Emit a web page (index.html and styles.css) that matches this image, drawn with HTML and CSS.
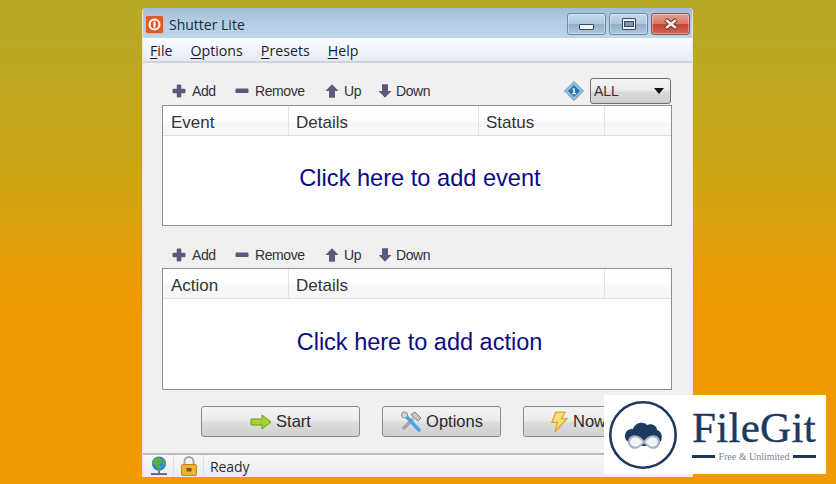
FILE: index.html
```html
<!DOCTYPE html>
<html lang="en">
<head>
<meta charset="utf-8">
<title>Shutter Lite</title>
<link rel="stylesheet" href="styles.css">
</head>
<body>
<svg class="defs" width="0" height="0" aria-hidden="true">
  <defs>
    <symbol id="i-add" viewBox="0 0 14 14"><path d="M4.700 1.500Q4.700 .5 5.700 .5H8.300Q9.300 .5 9.300 1.500V4.700H12.500Q13.500 4.700 13.500 5.700V8.300Q13.500 9.300 12.500 9.300H9.300V12.500Q9.300 13.500 8.300 13.500H5.700Q4.700 13.500 4.700 12.500V9.300H1.500Q.5 9.300 .5 8.300V5.700Q.5 4.700 1.500 4.700H4.700Z" fill="#5d5880"/></symbol>
    <symbol id="i-remove" viewBox="0 0 14 14"><rect x=".5" y="4.500" width="13" height="4.600" rx="1.200" fill="#5d5880"/></symbol>
    <symbol id="i-up" viewBox="0 0 14 14"><path d="M7 .3 13.600 7H10V13.700H4V7H.4Z" fill="#5d5880"/></symbol>
    <symbol id="i-down" viewBox="0 0 14 14"><path d="M7 13.700 13.400 7H10V.3H4V7H.6Z" fill="#5d5880"/></symbol>
  </defs>
</svg>
<main class="window">
  <header class="titlebar">
    <div class="title-left">
      <svg class="app-icon" width="19" height="19" viewBox="0 0 19 19"><rect x=".5" y=".5" width="18" height="18" rx="2" fill="#dc5a2a" stroke="#eeb49a"/><circle cx="9.500" cy="9.500" r="5" fill="none" stroke="#fff" stroke-width="2"/><rect x="8.500" y="6.500" width="2" height="6" fill="#fff"/></svg>
      <span class="title-text">Shutter Lite</span>
    </div>
    <div class="caption-buttons">
      <button class="cap cap-min" aria-label="Minimize"><span class="glyph-min"></span></button>
      <button class="cap cap-max" aria-label="Maximize"><span class="glyph-max"></span></button>
      <button class="cap cap-close" aria-label="Close">
        <svg width="16" height="12" viewBox="0 0 16 12"><path d="M2.500 1.500 13.500 10.500M13.500 1.500 2.500 10.500" stroke="#6b2a20" stroke-width="4.400"/><path d="M3 2 13 10M13 2 3 10" stroke="#f7ece6" stroke-width="2.600"/></svg>
      </button>
    </div>
  </header>
  <nav class="menubar">
    <span class="menu-item"><u>F</u>ile</span>
    <span class="menu-item"><u>O</u>ptions</span>
    <span class="menu-item"><u>P</u>resets</span>
    <span class="menu-item"><u>H</u>elp</span>
  </nav>
  <div class="content">
    <div class="toolbar">
      <span class="tool tool-add"><svg class="ti"><use href="#i-add"/></svg>Add</span>
      <span class="tool tool-remove"><svg class="ti"><use href="#i-remove"/></svg>Remove</span>
      <span class="tool tool-up"><svg class="ti"><use href="#i-up"/></svg>Up</span>
      <span class="tool tool-down"><svg class="ti"><use href="#i-down"/></svg>Down</span>
      <span class="spacer"></span>
      <svg class="info" width="20" height="20" viewBox="0 0 20 20"><path d="M10 .5 19.500 10 10 19.500 .5 10Z" fill="#8fc0e0" stroke="#5f9cc8"/><path d="M10 4 16 10 10 16 4 10Z" fill="#2f76a8"/><path d="M8.400 7.400H10.800V12H12V13.200H8.200V12H9.300V8.600H8.400Z" fill="#fff"/></svg>
      <div class="select"><span>ALL</span><span class="caret"></span></div>
    </div>
    <section class="list list-event">
      <div class="list-head">
        <span class="col col-1">Event</span>
        <span class="col col-2">Details</span>
        <span class="col col-3">Status</span>
        <span class="col col-4"></span>
      </div>
      <div class="list-body">Click here to add event</div>
    </section>
    <div class="toolbar toolbar-second">
      <span class="tool tool-add"><svg class="ti"><use href="#i-add"/></svg>Add</span>
      <span class="tool tool-remove"><svg class="ti"><use href="#i-remove"/></svg>Remove</span>
      <span class="tool tool-up"><svg class="ti"><use href="#i-up"/></svg>Up</span>
      <span class="tool tool-down"><svg class="ti"><use href="#i-down"/></svg>Down</span>
    </div>
    <section class="list list-action">
      <div class="list-head">
        <span class="col col-1">Action</span>
        <span class="col col-wide">Details</span>
        <span class="col col-4"></span>
      </div>
      <div class="list-body">Click here to add action</div>
    </section>
    <div class="actions">
      <button class="btn btn-start">
        <svg width="22" height="16" viewBox="0 0 22 16"><path d="M1 5H12V1L21 8 12 15V11H1Z" fill="#a8d030" stroke="#6f9a18"/></svg>Start
      </button>
      <button class="btn btn-options">
        <svg width="22" height="22" viewBox="0 0 22 22"><path d="M3 18 13 8" stroke="#a2a6ab" stroke-width="3.400"/><path d="M11 3.500 15 1 21 7 18 10 13 6Z" fill="#c2c5c8" stroke="#8a8a8a"/><path d="M4 3 19 19" stroke="#4aa6e8" stroke-width="3.600" stroke-linecap="round"/><circle cx="4.500" cy="4" r="3" fill="#d2d4d6" stroke="#8a8a8a"/></svg>Options
      </button>
      <button class="btn btn-now">
        <svg width="19" height="22" viewBox="0 0 20 23"><path d="M7 1H17L13 8H19L6 22 9 12H3Z" fill="#f9dc78" stroke="#dfa42a" stroke-width="1.300"/></svg>Now
      </button>
    </div>
  </div>
  <footer class="statusbar">
    <span class="status-cell cell-globe">
      <svg width="18" height="20" viewBox="0 0 19 21"><circle cx="9.500" cy="8" r="7.500" fill="#2e86cf"/><path d="M4 3 10 1.500 13 5 10 9 12 13 9 15 6 10 2.500 8Z" fill="#5cae3a"/><path d="M13 3 16 6 16 10 14 9Z" fill="#5cae3a"/><rect x="8.500" y="15" width="2" height="3" fill="#777"/><rect x="1" y="18" width="17" height="2" fill="#666"/></svg>
    </span>
    <span class="status-cell cell-lock">
      <svg width="16" height="20" viewBox="0 0 16 20"><path d="M3.500 9V5.500a4.500 4.500 0 0 1 9 0V9" fill="none" stroke="#a8a8a8" stroke-width="2"/><rect x=".5" y="8.500" width="15" height="11" rx="1.500" fill="#eeb13a" stroke="#c2841c"/><rect x="5.500" y="12" width="5" height="3.500" fill="#7c5410"/></svg>
    </span>
    <span class="status-text">Ready</span>
  </footer>
</main>
<aside class="watermark">
  <svg class="wm-logo" width="68" height="68" viewBox="0 0 68 68">
    <circle cx="34" cy="34" r="32.700" fill="none" stroke="#1c3a60" stroke-width="2.600"/>
    <path d="M17 39C14 33 18 27 24 28 26 21 35 20 38 24 43 22 48 25 48 29 52 30 54 35 52 40L46 45H24Z" fill="#1c3a60"/>
    <path d="M35 41C31 36 27 34 23 36 19 38 19 44 23 46 27 48 31 46 35 41 39 36 43 34 47 36 51 38 51 44 47 46 43 48 39 46 35 41Z" fill="#f2f4f6" stroke="#a9b2bd" stroke-width="2"/>
  </svg>
  <div class="wm-brand">
    <div class="wm-name">FileGit</div>
    <div class="wm-tag"><span class="wm-line"></span><span class="wm-sub">Free &amp; Unlimited</span><span class="wm-line"></span></div>
  </div>
</aside>
</body>
</html>
```
FILE: styles.css
```css
* { box-sizing: border-box; }
html, body { height: 100%; }
body {
  margin: 0;
  padding: 8px 0 0 142px;
  height: 484px;
  overflow: hidden;
  position: relative;
  font-family: "Liberation Sans", Arial, sans-serif;
  color: #222;
  background: linear-gradient(180deg, #b6a826 0%, #bca824 10%, #c9a618 32%, #dca00e 47%, #ec9a04 60%, #f09a00 68%, #f09a00 100%);
}
.defs { position: absolute; }
.window {
  width: 551px;
  height: 469px;
  display: flex;
  flex-direction: column;
  background: #f0f0f0;
  border-left: 1px solid #e6e6e0;
  border-right: 1px solid #e6e6e0;
  border-radius: 4px 4px 0 0;
  overflow: hidden;
}
.titlebar {
  height: 30px;
  flex: none;
  display: flex;
  justify-content: space-between;
  align-items: flex-start;
  background: linear-gradient(180deg, #a0bbd4 0%, #b2cde4 45%, #bcd6eb 100%);
}
.title-left { display: flex; align-items: center; gap: 5px; padding: 6px 0 0 2px; }
.app-icon { display: block; }
.title-text { font-family: "Open Sans", sans-serif; font-size: 14px; line-height: 21px; color: #1c2a38; }
.caption-buttons { display: flex; gap: 3px; padding: 5px 2px 0 0; }
.cap {
  height: 22px;
  padding: 0;
  display: flex;
  align-items: center;
  justify-content: center;
  border: 1px solid #6a89a8;
  border-radius: 3px;
  box-shadow: inset 0 0 0 1px rgba(255, 255, 255, .35);
}
.cap-min, .cap-max {
  width: 39px;
  background: linear-gradient(180deg, #c6d9ea 0%, #b0c8de 48%, #93aec8 52%, #acc8e0 100%);
}
.cap-close {
  width: 39px;
  background: linear-gradient(180deg, #dfa397 0%, #d6796a 48%, #c2453a 52%, #d26452 100%);
  border-color: #8a5552;
}
.glyph-min { width: 15px; height: 6px; margin-top: 6px; background: #eef3f7; border: 1px solid #394a5c; border-radius: 1px; }
.glyph-max { width: 14px; height: 12px; background: #eef3f7; border: 1px solid #394a5c; border-radius: 1px; display: flex; align-items: center; justify-content: center; }
.glyph-max::before { content: ""; width: 8px; height: 4px; background: #7d97b0; border: 1px solid #394a5c; }
.menubar {
  height: 25px;
  flex: none;
  display: flex;
  align-items: center;
  gap: 18px;
  padding: 1px 0 0 7px;
  font-family: "Open Sans", sans-serif;
  font-size: 14.200px;
  color: #1e1e22;
  background: linear-gradient(180deg, #fbfcfe 0%, #f2f5fa 45%, #e4e9f3 100%);
  border-bottom: 2px solid #d0d3d8;
}
.menu-item u { text-underline-offset: 2px; }
.content { flex: 1; padding: 15px 20px 0 19px; display: flex; flex-direction: column; }
.toolbar { height: 27px; flex: none; display: flex; align-items: center; padding: 0 1px 1px 10px; font-size: 14px; color: #30303a; }
.toolbar-second { margin-top: 15px; padding-top: 1px; padding-bottom: 0; }
.tool { display: flex; align-items: center; gap: 6px; letter-spacing: -.4px; }
.tool-add { width: 63px; }
.tool-remove { width: 90px; }
.tool-up { width: 53px; gap: 5px; }
.tool-down { gap: 4px; }
.ti { width: 14px; height: 14px; display: block; }
.spacer { flex: 1; }
.info { margin-right: 6px; display: block; }
.select {
  width: 81px;
  height: 26px;
  display: flex;
  align-items: center;
  justify-content: space-between;
  padding: 0 6px 0 3px;
  border: 1px solid #6d6d6d;
  border-radius: 3px;
  background: linear-gradient(180deg, #f4f4f4 0%, #ececec 45%, #d9d9d9 55%, #d0d0d0 100%);
  color: #333;
}
.caret { width: 0; height: 0; border-left: 5px solid transparent; border-right: 5px solid transparent; border-top: 6px solid #111; }
.list {
  flex: none;
  background: #fff;
  border: 1px solid #8e8e8e;
  display: flex;
  flex-direction: column;
}
.list-event { height: 121px; }
.list-action { height: 122px; }
.list-head {
  height: 30px;
  flex: none;
  display: flex;
  font-size: 17px;
  line-height: 33px;
  color: #333;
  background: linear-gradient(180deg, #ffffff 0%, #fefefe 50%, #f8f8f9 55%, #f6f7f8 100%);
  border-bottom: 1px solid #dcdee2;
}
.col { padding-left: 8px; border-right: 1px solid #e2e3e6; }
.col-1 { width: 126px; }
.col-2 { width: 190px; padding-left: 7px; }
.col-3 { width: 126px; padding-left: 7px; }
.col-wide { width: 316px; padding-left: 7px; }
.col-4 { flex: 1; border-right: 0; }
.list-body {
  flex: 1;
  display: flex;
  align-items: center;
  justify-content: center;
  padding: 0 0 5px 6px;
  font-size: 23.600px;
  color: #0b0b85;
}
.list-action .list-body { padding: 0 0 3px 5px; font-size: 23.500px; }
.actions { display: flex; gap: 22px; padding: 16px 0 0 39px; }
.btn {
  height: 31px;
  display: flex;
  align-items: center;
  justify-content: center;
  gap: 4px;
  padding: 0;
  flex: none;
  font-family: "Liberation Sans", Arial, sans-serif;
  font-size: 16.500px;
  color: #2a2a2a;
  border: 1px solid #8a8a8a;
  border-radius: 3px;
  background: linear-gradient(180deg, #f3f3f3 0%, #ebebeb 45%, #dcdcdc 55%, #cfcfcf 100%);
}
.btn svg { display: block; }
.btn-start { width: 159px; }
.btn-options { width: 119px; }
.btn-now { width: 126px; justify-content: flex-start; padding-left: 25px; gap: 5px; }
.statusbar {
  height: 24px;
  flex: none;
  display: flex;
  align-items: center;
  border-top: 2px solid #b9b9b9;
  background: linear-gradient(180deg, #f6f6f6 0%, #ededed 100%);
  font-family: "Open Sans", sans-serif;
  font-size: 14px;
  color: #2c2c2c;
}
.status-cell { height: 100%; display: flex; align-items: center; justify-content: center; border-right: 1px solid #dedede; }
.cell-globe { width: 31px; padding-left: 2px; }
.cell-lock { width: 30px; }
.status-text { padding-left: 6px; letter-spacing: -.1px; }
.watermark {
  position: absolute;
  left: 604px;
  top: 395px;
  width: 222px;
  height: 79px;
  display: flex;
  align-items: center;
  gap: 16px;
  padding-left: 5px;
  background: #fff;
}
.wm-logo { display: block; flex: none; }
.wm-brand { width: 124px; margin-left: -1px; }
.wm-name { font-family: "Liberation Serif", serif; font-size: 43px; line-height: 42px; color: #1c3a60; letter-spacing: .3px; -webkit-text-stroke: .4px #1c3a60; }
.wm-tag { display: flex; align-items: center; gap: 3px; margin-top: 2px; }
.wm-line { flex: 1; height: 3px; background: #1c3a60; }
.wm-sub { font-family: "Liberation Serif", serif; font-size: 10px; color: #7b828e; white-space: nowrap; }
```
